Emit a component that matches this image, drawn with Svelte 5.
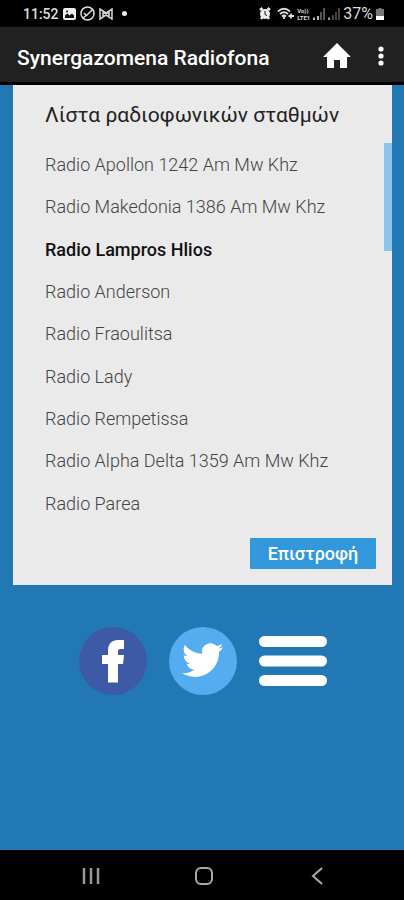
<script>
  const stations = [
    'Radio Apollon 1242 Am Mw Khz',
    'Radio Makedonia 1386 Am Mw Khz',
    'Radio Lampros Hlios',
    'Radio Anderson',
    'Radio Fraoulitsa',
    'Radio Lady',
    'Radio Rempetissa',
    'Radio Alpha Delta 1359 Am Mw Khz',
    'Radio Parea'
  ];
  let selected = $state(2);
</script>

<div class="screen">
  <div class="status">
    <div class="left">
      <span class="time">11:52</span>
      <svg width="13" height="12" viewBox="0 0 13 12"><rect width="13" height="12" rx="2" fill="#eee" /><path d="M2 10V7.500l2.500-2 2 2L9 5.500l2 2V10z" fill="#111" /><circle cx="4" cy="3.500" r="1" fill="#111" /></svg>
      <svg width="15" height="15" viewBox="0 0 15 15" fill="none" stroke="#ddd" stroke-width="1.500"><circle cx="7.500" cy="7.500" r="6.500" /><path d="M4 7l2.500 2.500L13 3M3 12l3-2.500" /></svg>
      <svg width="14" height="12" viewBox="0 0 14 12" fill="none" stroke="#ccc" stroke-width="1.600"><path d="M1 11V1l6 4 6-4v10L7 7zM4 3v6M10 3v6M4 4l6 4M4 8l6-4" /></svg>
      <i class="dot"></i>
    </div>
    <div class="right">
      <svg width="12" height="13" viewBox="0 0 12 13"><circle cx="6" cy="7" r="5" fill="#eee" /><path d="M1 3l2.500-2M11 3L8.500 1M2 12l1.500-2M10 12l-1.500-2" stroke="#eee" stroke-width="2.500" /><path d="M6 4v3.500l2 1" stroke="#111" fill="none" /></svg>
      <svg class="wifi" width="17" height="13" viewBox="0 0 17 13" fill="none" stroke="#ddd" stroke-width="1.800"><path d="M1 4.500Q7 -1 13 4.500M3 7q4-3.500 8 0M5 9.500q2-2 4 0M7 9v3M14 6.500v5M11.500 9H17" /></svg>
      <span class="lte"><span>Vo))</span><span>LTE1</span></span>
      <svg width="12" height="12" viewBox="0 0 12 12"><path d="M0 12V9.500h2V12zM4 12V8h2v4z" fill="#bbb" /><path d="M7 12V4h2v8zM10 12V0h2v12z" fill="#555" /></svg>
      <svg width="12" height="12" viewBox="0 0 12 12"><path d="M0 12V9.500h2V12z" fill="#999" /><path d="M4 12V7h2v5zM7 12V4h2v8zM10 12V0h2v12z" fill="#444" /></svg>
      <span class="percent">37%</span>
      <svg width="8" height="12" viewBox="0 0 8 12"><path d="M2.500 0h3v1H8v7H0V1h2.500z" fill="#777" /><path d="M0 8h8v4H0z" fill="#fff" /></svg>
    </div>
  </div>

  <header>
    <h1>Synergazomena Radiofona</h1>
    <button class="home" aria-label="Home">
      <svg width="28" height="26" viewBox="0 0 28 26"><path d="M14 0L0 14h4v11h7v-8h6v8h7V14h4z" fill="#fff" /></svg>
    </button>
    <button class="more" aria-label="More options">
      <svg width="6" height="20" viewBox="0 0 6 20" fill="#fff"><circle cx="3" cy="3" r="2.600" /><circle cx="3" cy="10" r="2.600" /><circle cx="3" cy="17" r="2.600" /></svg>
    </button>
  </header>

  <main>
    <section class="panel">
      <h2>Λίστα ραδιοφωνικών σταθμών</h2>
      <div class="scroller">
        <ul>
          {#each stations as name, i}
            <li><button class:active={selected === i} onclick={() => (selected = i)}>{name}</button></li>
          {/each}
        </ul>
        <div class="thumb"></div>
      </div>
      <div class="actions"><button class="back">Επιστροφή</button></div>
    </section>

    <div class="links">
      <a href="#facebook" aria-label="Facebook">
        <svg width="68" height="68" viewBox="0 0 68 68"><circle cx="34" cy="34" r="34" fill="#3c5aa6" /><path d="M29 55.500V37H23v-9h6v-4c0-7.500 4-11 10-11h6v9h-3.500c-2 0-2.500 1-2.500 2.500V28h6l-1 9h-5v18.500z" fill="#fff" /></svg>
      </a>
      <a href="#twitter" aria-label="Twitter">
        <svg width="68" height="68" viewBox="0 0 68 68"><circle cx="34" cy="34" r="34" fill="#55acee" /><path transform="translate(13 12.500) scale(1.720)" d="M23.950 4.570a10 10 0 0 1-2.820.770 4.960 4.960 0 0 0 2.160-2.720c-.950.550-2 .950-3.130 1.180a4.920 4.920 0 0 0-8.380 4.480C7.690 8.090 4.070 6.130 1.640 3.160a4.820 4.820 0 0 0-.670 2.480c0 1.710.870 3.210 2.190 4.100a4.900 4.900 0 0 1-2.230-.620v.060a4.920 4.920 0 0 0 3.950 4.830 5 5 0 0 1-2.210.080 4.940 4.940 0 0 0 4.600 3.420A9.870 9.870 0 0 1 0 19.540a13.990 13.990 0 0 0 7.560 2.210c9.050 0 14-7.500 14-13.980 0-.210 0-.420-.020-.630a9.940 9.940 0 0 0 2.410-2.570z" fill="#fff" /></svg>
      </a>
      <button aria-label="Menu">
        <svg width="68" height="68" viewBox="0 0 68 68" fill="#fff"><rect y="9" width="68" height="11" rx="5.500" /><rect y="28.500" width="68" height="11" rx="5.500" /><rect y="48" width="68" height="11" rx="5.500" /></svg>
      </button>
    </div>
  </main>

  <nav>
    <button aria-label="Recent apps"><svg width="18" height="18" viewBox="0 0 18 18" fill="none" stroke="#999" stroke-width="2.500"><path d="M2 1v16M9 1v16M16 1v16" /></svg></button>
    <button aria-label="Home screen"><svg width="18" height="18" viewBox="0 0 18 18" fill="none" stroke="#aaa" stroke-width="2"><rect x="1" y="1" width="16" height="16" rx="5" /></svg></button>
    <button aria-label="Back"><svg width="18" height="18" viewBox="0 0 18 18" fill="none" stroke="#aaa" stroke-width="2"><path d="M14 1L5 9l9 8" /></svg></button>
  </nav>
</div>

<style>
  :global(body) { margin: 0; background: #000; }
  .screen { display: flex; flex-direction: column; min-height: 100vh; font-family: Roboto, "Noto Sans", sans-serif; background: #000; }
  button { margin: 0; padding: 0; border: 0; background: none; font: inherit; color: inherit; cursor: pointer; }
  svg { display: block; flex: none; }
  h1, h2, ul { margin: 0; padding: 0; }
  .status { display: flex; justify-content: space-between; align-items: center; height: 27px; padding: 0 20px 0 23px; color: #ddd; }
  .left, .right { display: flex; align-items: center; }
  .left { gap: 4px; }
  .right { gap: 3px; }
  .time { font-size: 14px; line-height: 20px; font-weight: 500; }
  .percent { font-size: 16px; line-height: 20px; }
  .dot { width: 5px; height: 5px; margin-left: 5px; border-radius: 50%; background: #eee; }
  .wifi { margin-left: 3px; }
  .lte { display: flex; flex-direction: column; font-size: 6px; line-height: 7px; font-weight: 700; }
  header { display: flex; align-items: center; height: 58px; padding: 3px 20px 0 17px; background: #212121; border-bottom: 3px solid #000; box-sizing: border-box; }
  h1 { flex: 1; padding-top: 4px; font-size: 21px; line-height: 28px; font-weight: 500; color: #fff; white-space: nowrap; }
  .more { margin-left: 27px; }
  main { flex: 1; padding: 0 12px 24px 13px; background: #2178b5; }
  .panel { background: #eaeaea; padding: 16px 0; }
  h2 { padding: 0 32px; font-size: 21px; line-height: 28px; font-weight: 400; color: #222; white-space: nowrap; }
  .scroller { position: relative; margin-top: 14px; }
  ul { display: grid; grid-auto-rows: 1fr; min-height: 381px; padding: 0 32px; list-style: none; }
  li { display: flex; align-items: center; }
  li button { padding-top: 2px; font-size: 18px; line-height: 24px; font-weight: 300; color: #444; text-align: left; white-space: nowrap; }
  li button.active { font-weight: 500; color: #111; }
  .thumb { position: absolute; top: 0; right: 0; width: 8px; height: 108px; background: #8bc5ec; }
  .actions { display: flex; justify-content: flex-end; padding: 14px 16px 0; }
  .back { width: 126px; height: 31px; border-radius: 1px; background: #3398db; color: #fff; font-size: 18px; font-weight: 500; }
  .links { display: flex; justify-content: center; gap: 22px; padding-top: 42px; }
  nav { display: flex; justify-content: space-between; align-items: center; height: 50px; padding: 2px 78px 0 82px; box-sizing: border-box; }
</style>
